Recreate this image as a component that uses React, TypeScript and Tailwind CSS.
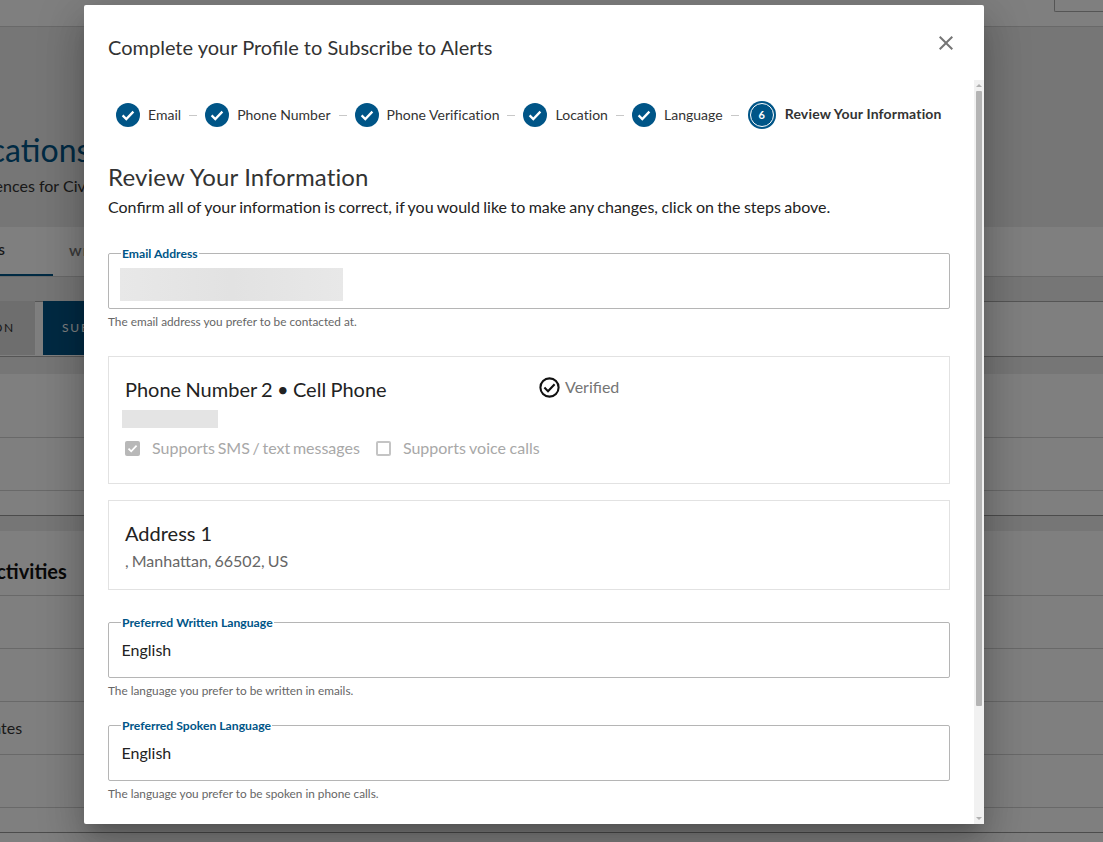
const font = { fontFamily: 'Lato, sans-serif' }

const steps = [
  { label: 'Email' },
  { label: 'Phone Number' },
  { label: 'Phone Verification' },
  { label: 'Location' },
  { label: 'Language' },
]

function CheckCircle() {
  return (
    <svg width="24" height="24" viewBox="0 0 24 24" className="shrink-0">
      <circle cx="12" cy="12" r="12" fill="#005587" />
      <path d="M6.6 12.4l3.7 3.6 7.1-7.4" fill="none" stroke="#fff" strokeWidth="2.3" />
    </svg>
  )
}

function ActiveStep() {
  return (
    <span className="ml-px flex h-7 w-7 shrink-0 items-center justify-center rounded-full bg-[#005587]">
      <span className="flex h-[24px] w-[24px] items-center justify-center rounded-full border border-white text-[11px] font-bold text-white">
        6
      </span>
    </span>
  )
}

function Stepper() {
  return (
    <div className="flex h-7 items-center pl-[8px] text-sm tracking-[0.02px] text-[#333]">
      {steps.map((step) => (
        <div key={step.label} className="flex items-center">
          <CheckCircle />
          <span className="ml-2 whitespace-nowrap">{step.label}</span>
          <span className="mx-2 h-px w-2 bg-[#c8c8c8]" />
        </div>
      ))}
      <ActiveStep />
      <span className="ml-[9px] -mt-[2px] whitespace-nowrap font-bold tracking-[0.17px] text-[#333]">Review Your Information</span>
    </div>
  )
}

function Field({ label, hint, children }: { label: string; hint: string; children: React.ReactNode }) {
  return (
    <div>
      <fieldset className="h-[62px] rounded-[2px] border border-[#b5b5b5] px-[9px]">
        <legend className="ml-[3px] px-px text-[12.2px] font-bold leading-[13px] text-[#005587]">{label}</legend>
        {children}
      </fieldset>
      <p className="mt-[6px] text-[11.8px] leading-[13px] text-[#666]">{hint}</p>
    </div>
  )
}

function English() {
  return <div className="mt-[9px] pl-[3.5px] text-base leading-[24px] text-[#222]">English</div>
}

function PageBackground() {
  const row = 'border-b border-[#d2d2d2]'
  return (
    <div className="h-[842px] overflow-hidden bg-white text-[#333]">
      <div className="flex h-[27px] justify-end border-b border-[#d2d2d2]">
        <div className="h-[12px] w-[49px] rounded-bl-[2px] border-b border-l border-[#aaa]" />
      </div>
      <div className="h-[200px] bg-[#ececec] pt-[103px]">
        <div className="-ml-[90px] whitespace-nowrap text-[32px] leading-[40px] text-[#005587]">Notifications</div>
        <div className="mt-[4px] -ml-[48px] whitespace-nowrap text-base leading-[24px]">Preferences for Civil</div>
      </div>
      <div className="flex h-[50px] border-b border-[#d2d2d2] text-xs font-bold tracking-[0.1em]">
        <div className="flex h-[49px] w-[53px] items-center justify-end border-b-2 border-[#005587] pr-[47px]">S</div>
        <div className="ml-[16px] flex h-[49px] items-center text-[#777]">WHAT</div>
      </div>
      <div className="h-[25px] border-b border-[#aaa] bg-[#ececec]" />
      <div className="flex h-[55px] gap-2 border-b border-[#aaa] text-xs tracking-[0.15em]">
        <div className="-mt-px flex h-[54px] w-[35px] shrink-0 items-center justify-end bg-[#dcdcdc] pr-[20px]">ON</div>
        <div className="-mt-px flex h-[54px] w-[120px] shrink-0 items-center bg-[#005587] pl-[19px] text-white">SUBSCRIBE</div>
      </div>
      <div className="h-[17px] bg-[#ececec]" />
      <div className={`h-[64px] ${row}`} />
      <div className={`h-[53px] ${row}`} />
      <div className="h-[25px] border-b border-[#999]" />
      <div className="h-[15px] bg-[#ececec]" />
      <div className={`flex h-[65px] items-end -ml-[66px] pb-[10px] text-[20px] leading-[28px] font-bold whitespace-nowrap text-[#111] ${row}`}>
        Alert Activities
      </div>
      <div className={`h-[53px] ${row}`} />
      <div className={`h-[53px] ${row}`} />
      <div className={`flex h-[53px] items-center -ml-[75px] text-base whitespace-nowrap ${row}`}>Alert Updates</div>
      <div className={`h-[53px] ${row}`} />
      <div className="h-[25px] border-b border-[#999]" />
    </div>
  )
}

export default function App() {
  return (
    <div className="relative h-[842px] overflow-hidden" style={font}>
      <PageBackground />
      <div className="absolute inset-0 flex items-start justify-center bg-black/50 pr-[35px] pt-[5px]">
        <div className="flex h-[819px] w-[900px] flex-col rounded-[2px] bg-white shadow-[0_11px_15px_-7px_rgba(0,0,0,0.2),0_24px_38px_3px_rgba(0,0,0,0.14),0_9px_46px_8px_rgba(0,0,0,0.12)]">
          <div className="flex h-[75px] shrink-0 items-start justify-between pl-6 pr-[26px]">
            <h2 className="mt-[29px] text-xl leading-[26px] text-[#333]">Complete your Profile to Subscribe to Alerts</h2>
            <svg width="24" height="24" viewBox="0 0 24 24" className="mt-[26px] text-[#757575]">
              <path d="M19 6.41 17.59 5 12 10.59 6.41 5 5 6.41 10.59 12 5 17.59 6.41 19 12 13.41 17.59 19 19 17.59 13.41 12z" fill="currentColor" />
            </svg>
          </div>
          <div className="flex min-h-0 flex-1">
            <div className="min-w-0 flex-1 overflow-hidden pl-6 pr-6 pt-[21px]">
              <Stepper />
              <h3 className="mt-[33px] text-2xl leading-[30px] tracking-[0.13px] text-[#333]">Review Your Information</h3>
              <p className="mt-[3px] text-base leading-[24px] text-[#222] [word-spacing:-0.65px]">
                Confirm all of your information is correct, if you would like to make any changes, click on the steps above.
              </p>
              <div className="mt-[28px]">
                <Field label="Email Address" hint="The email address you prefer to be contacted at.">
                  <div className="ml-[2px] mt-[8px] h-[33px] w-[223px] bg-gradient-to-r from-[#e8e8e8] via-[#e2e2e2] to-[#e8e8e8]" />
                </Field>
              </div>
              <section className="mt-[28px] h-[128px] border border-[#e2e2e2] pl-4 pt-[19px]">
                <div className="flex items-start">
                  <div className="w-[414px] text-xl leading-[26px] text-[#222] [word-spacing:-0.8px]">Phone Number 2 • Cell Phone</div>
                  <div className="-mt-px flex items-center gap-[5px] text-base leading-[24px] text-[#757575]">
                    <svg width="21" height="21" viewBox="0 0 21 21">
                      <circle cx="10.5" cy="10.5" r="9.1" fill="none" stroke="#111" strokeWidth="2.1" />
                      <path d="M5.4 10.6l3.6 3.6 6.6-7" fill="none" stroke="#111" strokeWidth="2.1" />
                    </svg>
                    Verified
                  </div>
                </div>
                <div className="-ml-[3px] mt-[8px] h-[18px] w-[96px] bg-[#e4e4e4]" />
                <div className="mt-[8px] flex h-[24px] items-center text-base text-[#a8a8a8]">
                  <span className="flex h-[15px] w-[15px] items-center justify-center rounded-[2px] bg-[#b8b8b8]">
                    <svg width="11" height="11" viewBox="0 0 11 11">
                      <path d="M1.5 5.6l2.7 2.7L9.6 2.7" fill="none" stroke="#fff" strokeWidth="1.8" />
                    </svg>
                  </span>
                  <span className="ml-3 [word-spacing:-1.4px]">Supports SMS / text messages</span>
                  <span className="ml-4 h-[15px] w-[15px] rounded-[2px] border-2 border-[#c4c4c4]" />
                  <span className="ml-3 [word-spacing:-0.5px]">Supports voice calls</span>
                </div>
              </section>
              <section className="mt-4 h-[90px] border border-[#e2e2e2] pl-4 pt-[19px]">
                <div className="text-xl leading-[26px] text-[#222]">Address 1</div>
                <div className="mt-[3px] text-base leading-[24px] text-[#666] [word-spacing:-1px]">, Manhattan, 66502, US</div>
              </section>
              <div className="mt-[26px]">
                <Field label="Preferred Written Language" hint="The language you prefer to be written in emails.">
                  <English />
                </Field>
              </div>
              <div className="mt-[22px]">
                <Field label="Preferred Spoken Language" hint="The language you prefer to be spoken in phone calls.">
                  <English />
                </Field>
              </div>
            </div>
            <div className="flex w-[10px] shrink-0 flex-col items-center bg-[#f1f1f1]">
              <svg width="8" height="11" viewBox="0 0 8 11" className="shrink-0">
                <path d="M1 7h6L4 4z" fill="#b0b0b0" />
              </svg>
              <div className="h-[615px] w-[6px] rounded-[1px] bg-[#b4b4b4]" />
              <div className="flex-1" />
              <svg width="8" height="11" viewBox="0 0 8 11" className="shrink-0">
                <path d="M1 4h6L4 7z" fill="#b0b0b0" />
              </svg>
            </div>
          </div>
        </div>
      </div>
    </div>
  )
}
